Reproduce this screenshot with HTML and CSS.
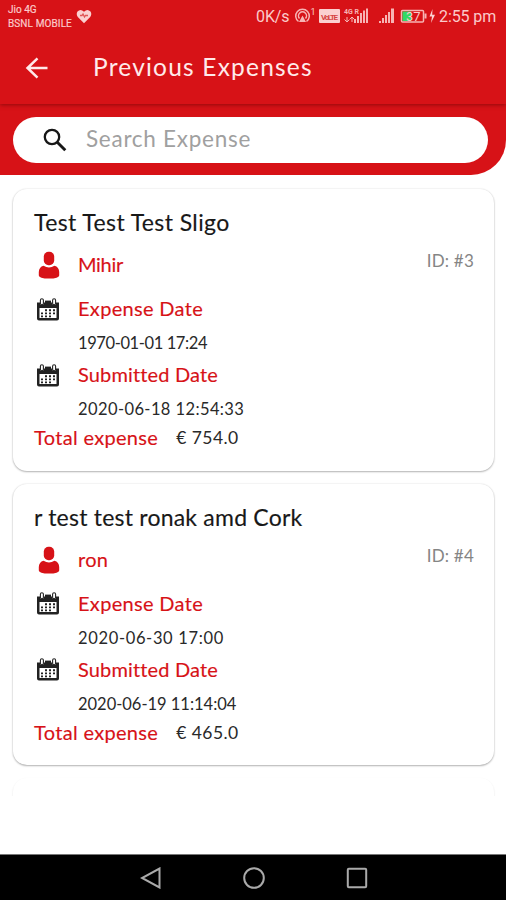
FILE: index.html
```html
<!DOCTYPE html>
<html lang="en">
<head>
<meta charset="utf-8">
<title>Previous Expenses</title>
<link rel="stylesheet" href="styles.css">
</head>
<body>
<svg class="defs" width="0" height="0" aria-hidden="true">
  <symbol id="person" viewBox="0 0 22 28">
    <rect x="5.800" y="0.800" width="10.400" height="13.400" rx="4.800"/>
    <path d="M5.500 14.800Q11 18 16.500 14.800Q21 16 21.200 21V24.500Q21 27.600 11 27.600T.8 24.500V21Q1 16 5.500 14.800Z"/>
  </symbol>
  <symbol id="calendar" viewBox="0 0 22 23">
    <path d="M0 4.500H3V6.500H6.500V4.500H15.500V6.500H19V4.500H22V20.500Q22 22.500 20 22.500H2Q0 22.500 0 20.500Z"/>
    <rect x="2.500" y="10" width="17" height="10" fill="#fff"/>
    <g fill="#fff" stroke="#222" stroke-width="1.100"><rect x="3.400" y=".7" width="3" height="6" rx="1.500"/><rect x="15.600" y=".7" width="3" height="6" rx="1.500"/></g>
    <path d="M8 2.600H14V5H8Z"/>
    <path d="M8 11.300H10V13.300H8ZM12 11.300H14V13.300H12ZM16 11.300H18V13.300H16ZM4 14.500H6V16.300H4ZM8 14.500H10V16.300H8ZM12 14.500H14V16.300H12ZM16 14.500H18V16.300H16ZM4 17.500H6V19.200H4ZM8 17.500H10V19.200H8ZM12 17.500H14V19.200H12Z"/>
  </symbol>
</svg>
<header class="top">
  <div class="status">
    <div class="carrier"><span class="c1">Jio 4G</span><span class="c2">BSNL MOBILE</span></div>
    <svg class="heart" width="16" height="15" viewBox="0 0 16 15"><path d="M8 14.200L1.800 8Q-.2 5 1.500 2.500Q4.600-.8 8 2.800Q11.400-.8 14.500 2.500Q16.200 5 14.200 8Z" fill="#fbd0d0"/><path d="M4 6.500H6L7 5L8.500 8L9.500 6.500H12" fill="none" stroke="#df5555" stroke-width="1.300"/></svg>
    <span class="speed">0K/s</span>
    <svg class="indicators" width="144" height="22" viewBox="0 0 144 22">
      <g fill="none" stroke="#f7b4b4" stroke-width="1.500"><path d="M4.500 16.500A6.800 6.800 0 1 1 12.500 16.500M5.500 13.500A4 4 0 1 1 11.500 13.500"/></g>
      <path d="M8.500 10.500L12 17H5Z" fill="#f7b4b4"/>
      <text x="16.500" y="9.500" class="tiny">1</text>
      <rect x="25" y="4" width="21" height="14" rx="1" fill="#fbd0d0"/><text x="27" y="14.500" class="volte" textLength="17">VoLTE</text>
      <text x="50" y="9" class="micro">4G R</text><path d="M53 12V17M50.500 14.500L53 17L55.500 14.500M58 17V12M56 14L58 12L60 14" stroke="#f7b4b4" fill="none"/>
      <path d="M60 18V14H62V18ZM63 18V11H65V18ZM66 18V8H68V18ZM69 18V5.500H71V18ZM72 18V3.500H74V18Z" fill="#f7b4b4"/>
      <path d="M85 18V16H87V18ZM88 18V13H90V18ZM91 18V10H93V18ZM94 18V7H96V18ZM97 18V3.500H100V18Z" fill="#f7b4b4"/>
      <rect x="107.500" y="5.500" width="22" height="11.500" rx="1" fill="none" stroke="#f7b4b4" stroke-width="1.500"/><rect x="108.500" y="6.500" width="8.500" height="9.500" fill="#31da65"/><rect x="130.500" y="8.500" width="2" height="5" fill="#f7b4b4"/>
      <text x="112" y="15.500" class="battery">37</text>
      <path d="M138.500 4L135.500 11.500H138L137 18L141 9.800H138.200Z" fill="#fbd0d0"/>
    </svg>
    <span class="clock">2:55 pm</span>
  </div>
  <div class="appbar">
    <svg class="back" width="24" height="24" viewBox="0 0 24 24"><path d="M12.500 2.300L2.500 12L12.500 21.700M2.800 12H22.500" fill="none" stroke="#ffeaea" stroke-width="2.500"/></svg>
    <h1>Previous Expenses</h1>
  </div>
</header>
<div class="search-area">
  <div class="search">
    <svg width="24" height="24" viewBox="0 0 24 24"><circle cx="9" cy="9" r="7.200" fill="none" stroke="#171717" stroke-width="2.300"/><path d="M14.300 14.300L22.300 22.300" stroke="#171717" stroke-width="2.900"/></svg>
    <span class="placeholder">Search Expense</span>
  </div>
</div>
<main class="list">
  <article class="card">
    <h2 class="name-a">Test Test Test Sligo</h2>
    <div class="row person"><svg class="user"><use href="#person"/></svg><span class="label employee">Mihir</span><span class="id">ID: #3</span></div>
    <div class="row"><svg class="cal"><use href="#calendar"/></svg><span class="label expense-date">Expense Date</span></div>
    <div class="date tightest">1970-01-01 17:24</div>
    <div class="row"><svg class="cal"><use href="#calendar"/></svg><span class="label submitted">Submitted Date</span></div>
    <div class="date wide">2020-06-18 12:54:33</div>
    <div class="total"><span class="label">Total expense</span><span class="amount">€ 754.0</span></div>
  </article>
  <article class="card">
    <h2 class="name-b">r test test ronak amd Cork</h2>
    <div class="row person"><svg class="user"><use href="#person"/></svg><span class="label">ron</span><span class="id">ID: #4</span></div>
    <div class="row"><svg class="cal"><use href="#calendar"/></svg><span class="label expense-date">Expense Date</span></div>
    <div class="date widest">2020-06-30 17:00</div>
    <div class="row"><svg class="cal"><use href="#calendar"/></svg><span class="label submitted">Submitted Date</span></div>
    <div class="date tight">2020-06-19 11:14:04</div>
    <div class="total"><span class="label">Total expense</span><span class="amount">€ 465.0</span></div>
  </article>
  <article class="card next"></article>
</main>
<nav class="navbar">
  <svg width="22" height="22" viewBox="0 0 22 22"><path d="M19.500 1.500V20.500L2 11Z"/></svg>
  <svg width="22" height="22" viewBox="0 0 22 22"><circle cx="11" cy="11" r="9.800"/></svg>
  <svg width="22" height="22" viewBox="0 0 22 22"><rect x="1.800" y="1.800" width="18.400" height="18.400" rx="1"/></svg>
</nav>
</body>
</html>
```
FILE: styles.css
```css
* { box-sizing: border-box; }
body {
  margin: 0;
  width: 506px;
  height: 900px;
  overflow: hidden;
  display: flex;
  flex-direction: column;
  background: #fff;
  font-family: Lato, "Liberation Sans", sans-serif;
  white-space: nowrap;
}
h1, h2 { margin: 0; font-weight: 400; }
svg { display: block; flex: none; }
.defs { position: absolute; }
.top {
  height: 104px;
  flex: none;
  background: #d71217;
  box-shadow: 0 1px 4px rgba(90, 0, 0, .55);
  z-index: 1;
}
.status { height: 32px; display: flex; padding-left: 8px; color: #fbcaca; font-family: Roboto, sans-serif; }
.carrier { display: flex; flex-direction: column; width: 68px; padding-top: 4px; font-size: 10px; -webkit-text-stroke: .2px #fbcaca; }
.c1 { line-height: 12px; }
.c2 { line-height: 15px; letter-spacing: .1px; }
.heart { margin-top: 9px; }
.speed { margin-left: 164px; font-size: 16px; line-height: 33px; width: 38px; letter-spacing: -.1px; }
.indicators { margin-top: 5px; }
.tiny { font-size: 9px; fill: #fbcaca; }
.micro { font-size: 7px; font-weight: 700; fill: #f7b4b4; }
.volte { font-size: 8px; font-weight: 700; fill: #d74444; }
.battery { font-size: 13px; fill: #fbcaca; }
.clock { margin-left: 1px; font-size: 16px; line-height: 33px; letter-spacing: -.1px; }
.appbar { height: 72px; display: flex; align-items: center; padding-left: 25px; }
h1 { margin: -2px 0 0 44px; font-size: 24.500px; line-height: 30px; color: #ffeaea; letter-spacing: 1.200px; }
.search-area { height: 71px; flex: none; padding: 13px 18px 12px 13px; background: #d71217; border-bottom-right-radius: 35px; }
.search { height: 46px; border-radius: 23px; background: #fff; display: flex; align-items: center; padding-left: 30px; }
.placeholder { margin: -3px 0 0 19px; font-size: 22.500px; line-height: 28px; color: #a0a0a0; letter-spacing: .730px; }
.list { height: 621px; flex: none; overflow: hidden; padding: 14px 12px 0 13px; display: flex; flex-direction: column; gap: 13px; }
.card {
  height: 281.500px;
  flex: none;
  border-radius: 14px;
  background: #fff;
  padding: 18px 20px 0 21px;
  box-shadow: 0 1px 2px rgba(0, 0, 0, .28), 0 0 2px rgba(0, 0, 0, .12);
}
.card.next { box-shadow: 0 1px 2px rgba(0, 0, 0, .12); }
h2 { font-size: 23px; line-height: 30px; color: #181818; -webkit-text-stroke: .15px #181818; }
.name-a { letter-spacing: .4px; }
.name-b { letter-spacing: .220px; }
.row { height: 30px; display: flex; align-items: center; }
.row.person { margin: 13px 0; align-items: flex-start; }
.user { width: 22px; height: 28px; fill: #d71217; margin: 1px 18px 0 4px; }
.cal { width: 22px; height: 23px; fill: #222; margin: 2px 19px 0 3px; }
.label { font-size: 20px; line-height: 28px; color: #d71217; letter-spacing: .320px; -webkit-text-stroke: .15px #d71217; }
.employee { letter-spacing: -.3px; }
.submitted { letter-spacing: .150px; }
.id { margin: 1px 0 0 auto; font-size: 17px; line-height: 20px; color: #858585; letter-spacing: .2px; }
.date { height: 36px; line-height: 40px; padding-left: 44px; font-size: 16.500px; color: #292929; }
.tightest { letter-spacing: -.4px; }
.tight { letter-spacing: -.020px; }
.wide { letter-spacing: .4px; }
.widest { letter-spacing: .650px; }
.total { display: flex; line-height: 28px; height: 28px; margin-top: -2px; }
.amount { margin-left: 18px; font-size: 17.500px; color: #292929; line-height: 30px; letter-spacing: .450px; }
.navbar { height: 46px; margin-top: auto; flex: none; background: #000; border-top: 1px solid #777; display: flex; justify-content: center; gap: 81px; padding: 12px 0 0 1px; }
.navbar svg { fill: none; stroke: #aaa; stroke-width: 2; }
```
